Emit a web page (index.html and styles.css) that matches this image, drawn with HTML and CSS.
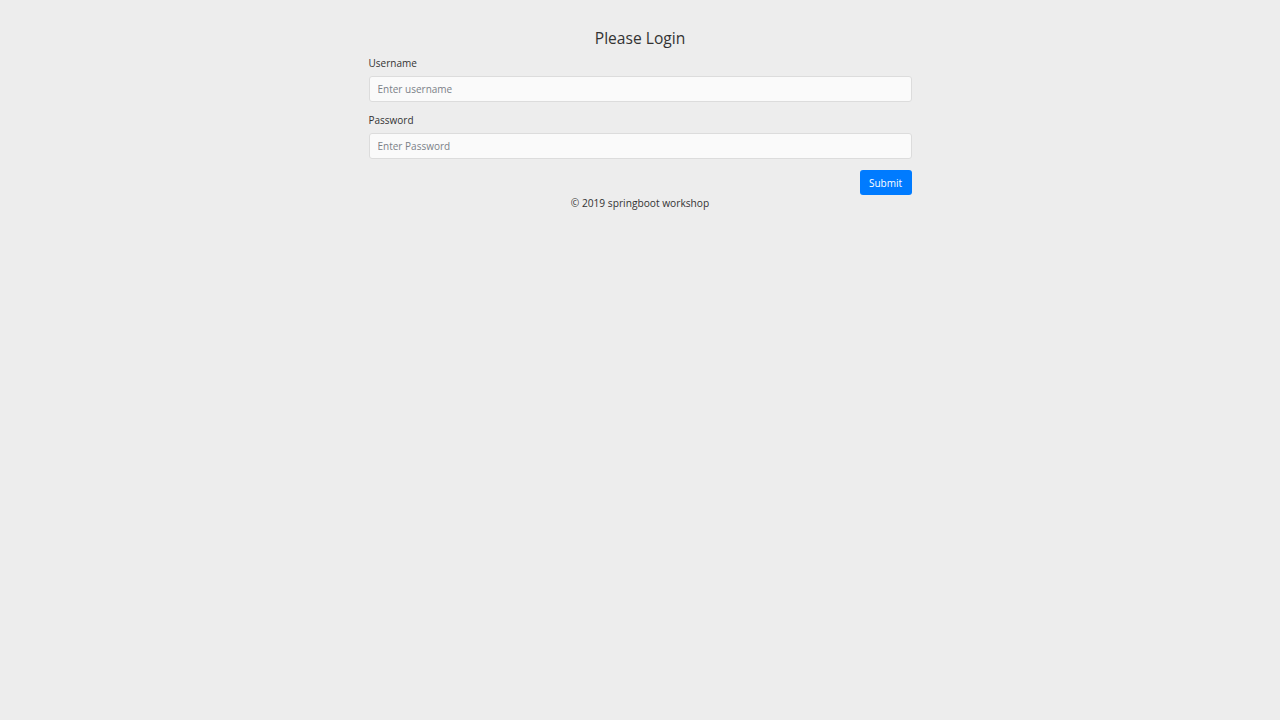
FILE: index.html
```html
<!DOCTYPE html>
<html lang="en">
<head>
  <meta charset="UTF-8">
  <meta name="viewport" content="width=device-width, initial-scale=1.0">
  <title>Login</title>
  <link rel="stylesheet" href="styles.css">
</head>
<body>
  <div class="login-container">
    <h4 class="login-title">Please Login</h4>
    <form class="login-form" onsubmit="return false;">
      <div class="form-group">
        <label for="username">Username</label>
        <input type="text" id="username" class="form-control" placeholder="Enter username">
      </div>
      <div class="form-group">
        <label for="password">Password</label>
        <input type="password" id="password" class="form-control" placeholder="Enter Password">
      </div>
      <div class="form-actions">
        <button type="submit" class="btn-submit">Submit</button>
      </div>
    </form>
    <p class="footer">&copy; 2019 springboot workshop</p>
  </div>
</body>
</html>
```

FILE: styles.css
```css
body {
  margin: 0;
  font-family: 'Open Sans', 'Noto Sans', sans-serif;
  background-color: #ededed;
  color: #333;
}

.login-container {
  width: 543px;
  margin: 0 auto;
  padding-top: 28px;
}

.login-title {
  margin: 0;
  font-size: 15.6px;
  font-weight: normal;
  line-height: 20px;
  text-align: center;
  color: #333;
}

.form-group {
  display: flex;
  flex-direction: column;
}

.form-group label {
  margin-top: 7px;
  font-size: 10px;
  line-height: 16px;
  color: #333;
}

.form-group + .form-group label {
  margin-top: 10px;
}

.form-control {
  margin-top: 5px;
  height: 26px;
  box-sizing: border-box;
  padding: 0 8px;
  font-family: inherit;
  font-size: 10px;
  color: #495057;
  background-color: #fafafa;
  border: 1px solid #dcdcdc;
  border-radius: 3px;
  outline: none;
}

.form-control::placeholder {
  color: #7b8188;
}

.form-actions {
  display: flex;
  justify-content: flex-end;
  margin-top: 11px;
}

.btn-submit {
  width: 52px;
  height: 25px;
  padding: 0;
  font-family: inherit;
  font-size: 10px;
  color: #ffffff;
  background-color: #007bff;
  border: none;
  border-radius: 3px;
  cursor: pointer;
}

.footer {
  margin: 0;
  font-size: 10.2px;
  line-height: 17px;
  text-align: center;
  color: #333;
}
```
